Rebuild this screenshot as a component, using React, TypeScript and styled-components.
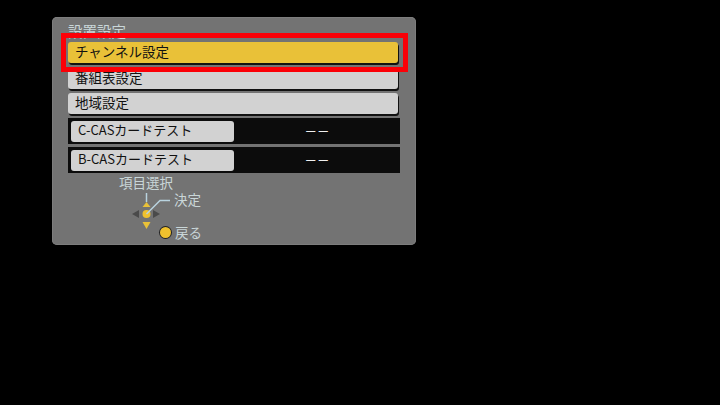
import styled, { createGlobalStyle } from "styled-components";

const GlobalStyle = createGlobalStyle`
  html, body {
    margin: 0;
    padding: 0;
    width: 720px;
    height: 405px;
    overflow: hidden;
    background: #000;
  }
  body {
    font-family: "Noto Sans CJK JP", "Noto Sans", sans-serif;
  }
`;

const Screen = styled.div`
  width: 720px;
  height: 405px;
  padding: 17px 0 0 52px;
  box-sizing: border-box;
  background: #000;
`;

const Panel = styled.section`
  position: relative;
  width: 364px;
  height: 228px;
  box-sizing: border-box;
  padding: 4px 16px 0;
  background: #737373;
  border-radius: 5px;
  box-shadow: inset 0 0 0 1px #7d7d7d;
`;

const Title = styled.div`
  height: 21px;
  font-size: 14.5px;
  line-height: 19px;
  color: #c9d6d8;
`;

const List = styled.div`
  display: flex;
  flex-direction: column;
  width: 332px;
`;

const MenuItem = styled.div<{ $active?: boolean; $gap: number }>`
  width: 330px;
  height: 21px;
  margin-bottom: ${({ $gap }) => $gap}px;
  padding-left: 7px;
  box-sizing: border-box;
  border-radius: 3px;
  background: ${({ $active }) => ($active ? "#e9c138" : "#d2d2d2")};
  box-shadow: 1px 2px 0 #111;
  color: #111;
  font-size: 13.5px;
  line-height: 18px;
  white-space: nowrap;
`;

const TestRow = styled.div<{ $gap: number }>`
  display: flex;
  align-items: center;
  height: 26px;
  margin-bottom: ${({ $gap }) => $gap}px;
  padding-left: 3px;
  background: #0c0c0c;
`;

const TestLabel = styled.div`
  width: 163px;
  height: 21px;
  box-sizing: border-box;
  padding-left: 7px;
  border-radius: 3px;
  background: #d2d2d2;
  color: #111;
  font-size: 13px;
  line-height: 18px;
  white-space: nowrap;
`;

const TestValue = styled.div`
  flex: 1;
  padding-left: 1px;
  text-align: center;
  color: #f0f0f0;
  font-size: 11.5px;
  letter-spacing: 1px;
`;

const Legend = styled.div`
  display: flex;
  flex-direction: column;
  padding: 2px 0 0 51px;
  color: #c9d6d8;
  font-size: 13.5px;
  line-height: 15px;
`;

const LegendPad = styled.div`
  display: flex;
  align-items: flex-start;
  height: 35px;
  margin-left: 13px;
`;

const ConfirmLabel = styled.span`
  margin-top: 2px;
`;

const LegendBack = styled.div`
  display: flex;
  align-items: center;
  gap: 4px;
  margin-left: 41px;
`;

const YellowDot = styled.span`
  display: block;
  width: 11px;
  height: 11px;
  border-radius: 50%;
  background: #f0c22e;
  box-shadow: 0 0 0 1px #222;
`;

const Highlight = styled.div`
  position: absolute;
  left: 9px;
  top: 16px;
  width: 347px;
  height: 39px;
  box-sizing: border-box;
  border: 5px solid #fb0007;
  pointer-events: none;
`;

const DPad = () => (
  <svg width="42" height="40" viewBox="0 0 42 40">
    <path d="M14.5 3v9" stroke="#b9d3df" strokeWidth="1.5" fill="none" />
    <path d="M14.5 12l4 5h-8z" fill="#e9c138" />
    <path d="M14.5 39l-4-7h8z" fill="#e9c138" />
    <path d="M0 24l7-4v8z" fill="#4a4a4a" />
    <path d="M28 24l-7-4v8z" fill="#4a4a4a" />
    <circle cx="14.5" cy="24" r="4" fill="#f0c22e" />
    <path d="M14.5 24l13.5-13.5h10" stroke="#b9d3df" strokeWidth="1.5" fill="none" />
  </svg>
);

const App = () => (
  <>
    <GlobalStyle />
    <Screen>
      <Panel>
        <Title>設置設定</Title>
        <List>
          <MenuItem $active $gap={5}>チャンネル設定</MenuItem>
          <MenuItem $gap={4}>番組表設定</MenuItem>
          <MenuItem $gap={4}>地域設定</MenuItem>
          <TestRow $gap={3}>
            <TestLabel>C-CASカードテスト</TestLabel>
            <TestValue>ーー</TestValue>
          </TestRow>
          <TestRow $gap={0}>
            <TestLabel>B-CASカードテスト</TestLabel>
            <TestValue>ーー</TestValue>
          </TestRow>
        </List>
        <Legend>
          <span>項目選択</span>
          <LegendPad>
            <DPad />
            <ConfirmLabel>決定</ConfirmLabel>
          </LegendPad>
          <LegendBack>
            <YellowDot />
            <span>戻る</span>
          </LegendBack>
        </Legend>
        <Highlight />
      </Panel>
    </Screen>
  </>
);

export default App;
